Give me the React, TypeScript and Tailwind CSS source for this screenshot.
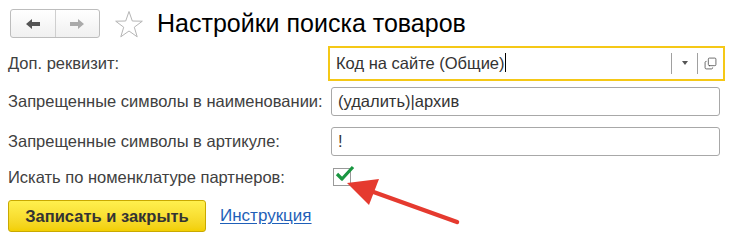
import { Copy } from "lucide-react";

const font = { fontFamily: '"Liberation Sans", Arial, sans-serif' };

function Field({ value, focused }: { value: string; focused?: boolean }) {
  if (focused) {
    return (
      <div className="ml-[-3px] flex h-[35px] w-[397px] items-center border-2 border-[#f5c816] bg-white pl-[6px]">
        <span className="flex-1 text-[16.5px] text-[#333]">
          {value}
          <span className="inline-block h-[19px] w-px translate-y-[3px] bg-black" />
        </span>
        <div className="flex h-[21px] w-[26px] items-center justify-center border-l border-[#a0a0a0]">
          <div className="h-0 w-0 border-x-[3.5px] border-t-[4px] border-x-transparent border-t-[#555]" />
        </div>
        <div className="flex h-[21px] w-[26px] items-center justify-center border-l border-[#a0a0a0]">
          <Copy size={13} strokeWidth={1.4} className="text-[#444] -scale-y-100" />
        </div>
      </div>
    );
  }
  return (
    <div className="flex h-[29px] w-[389px] items-center rounded-[3px] border border-[#a8a8a8] bg-white pl-[6px] text-[16.5px] text-[#333]">
      {value}
    </div>
  );
}

export default function App() {
  return (
    <div className="relative h-[246px] w-[740px] bg-white" style={font}>
      <div className="flex h-[46px] items-center pl-[10px] pt-[1px]">
        <div className="flex h-[29px] w-[90px] rounded-[3px] border border-[#bdbdbd] bg-gradient-to-b from-white to-[#f0f0f0]">
          <div className="flex flex-1 items-center justify-center border-r border-[#cfcfcf]">
            <svg width="14" height="10" viewBox="0 0 14 10">
              <path d="M0 5 L6 0 V3 H14 V7 H6 V10 Z" fill="#555" />
            </svg>
          </div>
          <div className="flex flex-1 items-center justify-center">
            <svg width="14" height="10" viewBox="0 0 14 10">
              <path d="M14 5 L8 0 V3 H0 V7 H8 V10 Z" fill="#aaa" />
            </svg>
          </div>
        </div>
        <svg width="30" height="28" viewBox="0 0 30 28" className="ml-[14px]">
          <path
            d="M15 1.5 L18.3 11 L28.3 11.2 L20.3 17.2 L23.2 26.8 L15 21 L6.8 26.8 L9.7 17.2 L1.7 11.2 L11.7 11 Z"
            fill="none"
            stroke="#b5b5b5"
            strokeWidth="1"
          />
        </svg>
        <h1 className="ml-[13px] text-[25px] leading-none text-black">Настройки поиска товаров</h1>
      </div>

      <div className="flex flex-col pl-[8px] text-[16.5px] text-[#404040]">
        <div className="flex h-[34px] items-center">
          <span className="w-[323px]">Доп. реквизит:</span>
          <Field value="Код на сайте (Общие)" focused />
        </div>
        <div className="mt-[7px] flex h-[29px] items-center">
          <span className="w-[323px]">Запрещенные символы в наименовании:</span>
          <Field value="(удалить)|архив" />
        </div>
        <div className="mt-[11px] flex h-[29px] items-center">
          <span className="w-[323px]">Запрещенные символы в артикуле:</span>
          <Field value="!" />
        </div>
        <div className="mt-[8px] flex h-[26px] items-center">
          <span className="w-[325px]">Искать по номенклатуре партнеров:</span>
          <div className="relative h-[18px] w-[18px] border border-[#9a9a9a] bg-white">
            <svg width="20" height="16" viewBox="0 0 20 16" className="absolute left-[1px] top-[-4px]">
              <path d="M2 9 L7 14 L18 2" fill="none" stroke="#1a9641" strokeWidth="3.2" strokeLinejoin="round" />
            </svg>
          </div>
        </div>
        <div className="mt-[10px] flex items-center">
          <button className="h-[32px] w-[198px] rounded-[3px] border border-[#c9a900] bg-gradient-to-b from-[#fff04d] to-[#f2cf00] text-[16.5px] font-bold text-[#333]">
            Записать и закрыть
          </button>
          <a href="#" className="ml-[14px] text-[17px] text-[#1f5fb8] underline underline-offset-2">
            Инструкция
          </a>
        </div>
      </div>

      <svg className="absolute left-0 top-0" width="740" height="246" viewBox="0 0 740 246">
        <line x1="457" y1="222" x2="368" y2="190" stroke="#e53a2f" strokeWidth="4.5" strokeLinecap="round" />
        <path d="M347 183 L379 179 L369 205 Z" fill="#e53a2f" />
      </svg>
    </div>
  );
}
